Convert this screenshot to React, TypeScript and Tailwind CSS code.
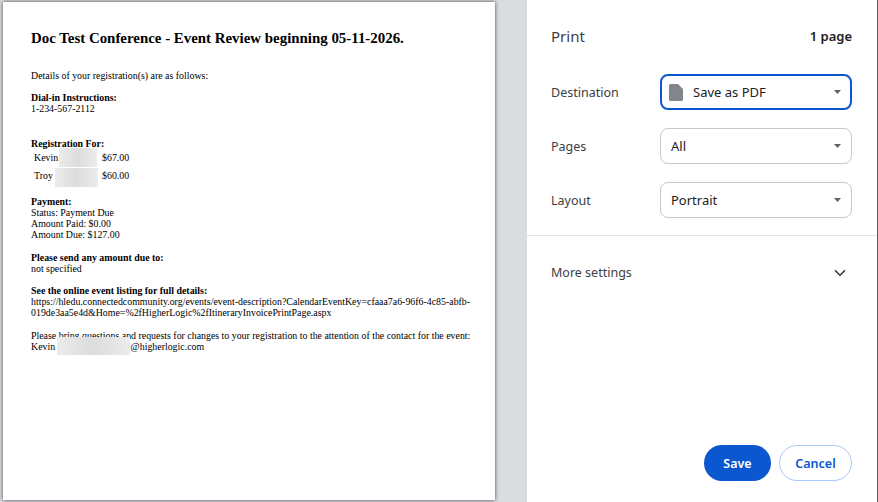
import React from "react";
import { ChevronDown } from "lucide-react";

const Patch = ({ className }: { className: string }) => (
  <div
    className={`absolute bg-gradient-to-r from-[#ececec] via-[#dcdcdc] to-[#ececec] blur-[0.5px] ${className}`}
  />
);

const Caret = () => (
  <svg viewBox="0 0 7 4" className="ml-auto h-1 w-[7px] shrink-0 fill-[#5f6368]">
    <path d="M0 0h7L3.500 4z" />
  </svg>
);

const FieldRow = ({
  label,
  value,
  focused,
  icon,
}: {
  label: string;
  value: string;
  focused?: boolean;
  icon?: React.ReactNode;
}) => (
  <div className="flex h-9 items-center">
    <span className="w-[109px] pt-[3px] text-[12.5px] text-[#3c4043]">{label}</span>
    <div
      className={`flex h-9 w-[192px] items-center rounded-lg bg-white text-[13px] text-[#202124] ${
        focused
          ? "border-2 border-[#0b57d0] pl-[7px] pr-[9px]"
          : "border border-[#c7c7c7] pl-[10px] pr-[10px]"
      }`}
    >
      {icon}
      <span className="pt-px">{value}</span>
      <Caret />
    </div>
  </div>
);

export default function App() {
  return (
    <div className="flex h-[502px] w-[878px] overflow-hidden bg-[#dadce0]">
      <div className="w-[527px] shrink-0 pl-[3px] pt-[2px]">
        <div className="relative h-[498px] w-[492px] bg-white pl-[28px] pt-[27px] font-['Liberation_Serif',serif] text-[9.9px] leading-[11px] text-black shadow-[0_0_4px_rgba(0,0,0,0.7)]">
          <h1 className="text-[14.9px] font-bold leading-[18px]">
            Doc Test Conference - Event Review beginning 05-11-2026.
          </h1>
          <p className="mt-[23px]">Details of your registration(s) are as follows:</p>
          <p className="mt-[11px] font-bold">Dial-in Instructions:</p>
          <p>1-234-567-2112</p>
          <p className="mt-[24px] font-bold">Registration For:</p>
          <div className="-mt-px pl-[3px]">
            <div className="flex h-[18px] items-center">
              <span className="w-[68px]">Kevin</span>
              <span>$67.00</span>
            </div>
            <div className="flex h-[18px] items-center">
              <span className="w-[68px]">Troy</span>
              <span>$60.00</span>
            </div>
          </div>
          <p className="mt-[12px] font-bold">Payment:</p>
          <p>Status: Payment Due</p>
          <p>Amount Paid: $0.00</p>
          <p>Amount Due: $127.00</p>
          <p className="mt-[12px] font-bold">Please send any amount due to:</p>
          <p>not specified</p>
          <p className="mt-[11px] font-bold">See the online event listing for full details:</p>
          <p className="whitespace-nowrap">
            https://hledu.connectedcommunity.org/events/event-description?CalendarEventKey=cfaaa7a6-96f6-4c85-abfb-
            <br />
            019de3aa5e4d&amp;Home=%2fHigherLogic%2fItineraryInvoicePrintPage.aspx
          </p>
          <p className="mt-[12px] whitespace-nowrap">
            Please bring questions and requests for changes to your registration to the attention of the contact for the event:
          </p>
          <p>
            Kevin <span className="ml-[73px]">@higherlogic.com</span>
          </p>
          <Patch className="left-[56px] top-[146px] h-[19px] w-[38px]" />
          <Patch className="left-[52px] top-[166px] h-[19px] w-[43px]" />
          <Patch className="left-[54px] top-[335px] h-[18px] w-[73px]" />
        </div>
      </div>

      <div className="flex w-[351px] shrink-0 flex-col border-r border-[#5f5f5f] bg-white font-['Noto_Sans',sans-serif]">
        <div className="flex items-center justify-between pl-6 pr-[25px] pt-[26px]">
          <span className="text-[15px] leading-5 text-[#3c4043]">Print</span>
          <span className="text-[13px] font-semibold leading-5 text-[#202124]">1 page</span>
        </div>
        <div className="flex flex-col gap-[18px] pl-6 pt-[28px]">
          <FieldRow
            label="Destination"
            value="Save as PDF"
            focused
            icon={
              <svg viewBox="0 0 14 17" className="mr-[10px] h-[17px] w-[14px] fill-[#80868b]">
                <path d="M1.500 0H9l5 5v10.500a1.500 1.500 0 0 1-1.500 1.500h-11A1.500 1.500 0 0 1 0 15.500v-14A1.500 1.500 0 0 1 1.500 0z" />
              </svg>
            }
          />
          <FieldRow label="Pages" value="All" />
          <FieldRow label="Layout" value="Portrait" />
        </div>
        <div className="mt-[17px] h-px bg-[#e3e3e3]" />
        <div className="flex h-[73px] items-center justify-between pl-6 pr-[28px]">
          <span className="pt-[2px] text-[12.5px] text-[#3c4043]">More settings</span>
          <ChevronDown className="h-[18px] w-[18px] text-[#3c4043]" strokeWidth={2.25} />
        </div>
        <div className="mt-auto flex justify-end gap-2 pb-[21px] pr-[25px]">
          <button className="h-9 w-[67px] rounded-full bg-[#0b57d0] pt-[2px] text-[12.5px] font-semibold text-white">
            Save
          </button>
          <button className="h-9 w-[73px] rounded-full border border-[#a8c7fa] bg-white pt-[2px] text-[12.5px] font-semibold text-[#0b57d0]">
            Cancel
          </button>
        </div>
      </div>
    </div>
  );
}
